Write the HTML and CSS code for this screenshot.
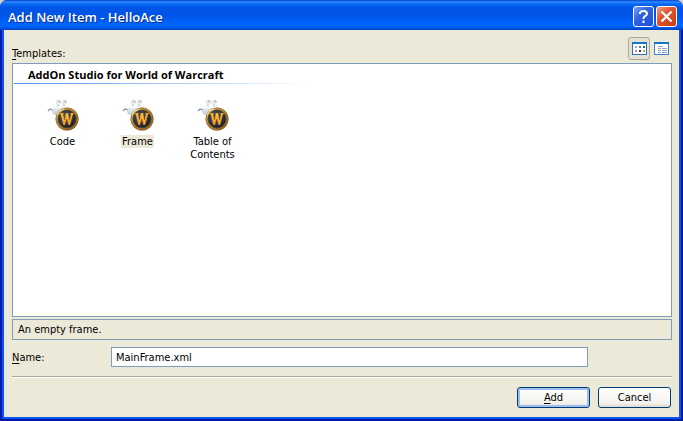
FILE: index.html
```html
<!DOCTYPE html>
<html lang="en">
<head>
<meta charset="utf-8">
<title>Add New Item - HelloAce</title>
<link rel="stylesheet" href="styles.css">
</head>
<body>
<svg class="defs" width="0" height="0" aria-hidden="true">
  <defs>
    <linearGradient id="gold" x1="0" y1="0" x2="1" y2="1">
      <stop offset="0" stop-color="#ecd48c"/>
      <stop offset=".45" stop-color="#b98a3a"/>
      <stop offset="1" stop-color="#80571c"/>
    </linearGradient>
    <radialGradient id="navy" cx=".4" cy=".35" r=".7">
      <stop offset="0" stop-color="#4a5c70"/>
      <stop offset="1" stop-color="#101c2c"/>
    </radialGradient>
    <linearGradient id="flame" x1="0" y1="0" x2="0" y2="1">
      <stop offset="0" stop-color="#ffc63c"/>
      <stop offset="1" stop-color="#f09a28"/>
    </linearGradient>
    <linearGradient id="robot" x1="0" y1="0" x2="0" y2="1">
      <stop offset="0" stop-color="#f4f6f8"/>
      <stop offset="1" stop-color="#c3ccd6"/>
    </linearGradient>
    <symbol id="addon" viewBox="0 0 32 32">
      <path d="M1 12l2-2 3 1" fill="none" stroke="#8c9bab" stroke-width="1.500"/>
      <path d="M11 4v4M17 4v4" stroke="#c8d0d8" stroke-width="2"/>
      <circle cx="11" cy="3" r="2.500" fill="#e6eaee"/>
      <circle cx="17" cy="3" r="2.500" fill="#e6eaee"/>
      <path d="M11 2h2v2M17 2h2v2" fill="none" stroke="#a9b2bb"/>
      <path d="M7 8q7-3 15 0l2 3v5H8q-3-1-3-4z" fill="url(#robot)"/>
      <path d="M8 9q6-2 13 0" fill="none" stroke="#fff"/>
      <circle cx="20" cy="20" r="11.500" fill="url(#gold)"/>
      <circle cx="20" cy="20" r="11" fill="none" stroke="#8a6530" stroke-width=".7"/>
      <circle cx="20" cy="20" r="9" fill="url(#navy)" stroke="#594018"/>
      <path d="M10 16q2-5 7-6" fill="none" stroke="#f8e8b0"/>
      <path d="M12.500 14H17l-.8 1.500L17.500 21l1.300-7h2.400l1.300 7 1.300-5.500L23 14h4l-1.200 2-2.600 10h-1.800L19.800 20 18 26h-1.800L13.800 16z" fill="url(#flame)" stroke="#8a4a10" stroke-width=".4"/>
    </symbol>
  </defs>
</svg>
<form class="window">
  <header class="titlebar">
    <h1 class="title">Add New Item - HelloAce</h1>
    <button class="caption help" type="button" aria-label="Help">
      <svg width="19" height="19" viewBox="0 0 19 19" aria-hidden="true"><path d="M6 7V5.500Q7 4 9.500 4 13 4 13 6.500 13 8 11 9.200 9.500 10 9.500 12M9.500 13.500v2.500" fill="none" stroke="#fff" stroke-width="2"/></svg>
    </button>
    <button class="caption close" type="button" aria-label="Close">
      <svg width="19" height="19" viewBox="0 0 19 19" aria-hidden="true"><path d="M4.500 4.500l10 10M14.500 4.500l-10 10" stroke="#fff" stroke-width="2.300"/></svg>
    </button>
  </header>
  <main class="content">
    <div class="toolbar">
      <h2 class="label" id="templates"><u>T</u>emplates:</h2>
      <button class="view pressed" type="button" aria-label="Large icons" aria-pressed="true">
        <svg width="15" height="13" viewBox="0 0 15 13" aria-hidden="true">
          <rect x=".5" y=".5" width="14" height="12" fill="#fff" stroke="#2476c5"/>
          <path d="M0 0h15v2H0z" fill="#1675cd"/>
          <path d="M3 4h2v2H3z" fill="#a8a8c0"/><path d="M7 4h2v2H7z" fill="#5878b0"/><path d="M11 4h2v2h-2z" fill="#118a24"/>
          <path d="M3 8h2v2H3z" fill="#e58068"/><path d="M7 8h2v2H7z" fill="#173c92"/><path d="M11 8h2v2h-2z" fill="#d2a017"/>
        </svg>
      </button>
      <button class="view" type="button" aria-label="Small icons" aria-pressed="false">
        <svg width="15" height="13" viewBox="0 0 15 13" aria-hidden="true">
          <rect x=".5" y=".5" width="14" height="12" fill="#fff" stroke="#3b85d0"/>
          <path d="M0 0h15v2H0z" fill="#1675cd"/>
          <path d="M4 4.500h5M4 6.500h3M4 8.500h3M4 10.500h3M8 6.500h5M8 8.500h5M8 10.500h5" stroke="#91a5bd"/>
        </svg>
      </button>
    </div>
    <section class="templates" aria-labelledby="templates">
      <h3 class="group">AddOn Studio for World of Warcraft</h3>
      <ul class="items">
        <li class="item"><svg class="icon" aria-hidden="true"><use href="#addon"/></svg><span class="name">Code</span></li>
        <li class="item selected"><svg class="icon" aria-hidden="true"><use href="#addon"/></svg><span class="name">Frame</span></li>
        <li class="item"><svg class="icon" aria-hidden="true"><use href="#addon"/></svg><span class="name">Table of Contents</span></li>
      </ul>
    </section>
    <p class="description">An empty frame.</p>
    <div class="field">
      <label for="name"><u>N</u>ame:</label>
      <input class="input" id="name" type="text" value="MainFrame.xml">
    </div>
    <footer class="actions">
      <button class="button default" type="submit"><span><u>A</u>dd</span></button>
      <button class="button" type="button">Cancel</button>
    </footer>
  </main>
</form>
</body>
</html>
```
FILE: styles.css
```css
* {
  box-sizing: border-box;
}

body {
  margin: 0;
  background: #d8d4c4;
  color: #000;
  font: 11px/13px "DejaVu Sans Condensed", "DejaVu Sans", sans-serif;
}

h1, h2, h3, p, ul {
  margin: 0;
  padding: 0;
  font-size: inherit;
  font-weight: normal;
}

button, input {
  font: inherit;
  color: inherit;
}

u {
  text-underline-offset: 2px;
}

.defs {
  position: absolute;
}

.window {
  display: flex;
  flex-direction: column;
  min-height: 100vh;
  border-radius: 7px 7px 0 0;
  overflow: hidden;
  background: #0846dc;
}

.titlebar {
  position: relative;
  z-index: 1;
  display: flex;
  align-items: center;
  gap: 2px;
  height: 30px;
  padding: 3px 6px 0 8px;
  background: linear-gradient(#0840c8 0, #2b8cff 2px, #0a68f4 4px, #0055e5 8px, #0055e8 16px, #0065ff 24px, #0060f8 27px, #0040c0 30px);
}

.title {
  flex: 1;
  color: #fff;
  font: 600 13px/18px "Open Sans", sans-serif;
  text-shadow: 1px 1px #0a2a8c;
}

.caption {
  display: grid;
  place-items: center;
  width: 21px;
  height: 21px;
  padding: 0;
  border: 1px solid #fff;
  border-radius: 3px;
}

.help {
  background: linear-gradient(135deg, #7ba2f4, #2f63e0 40%, #1c50d8);
}

.close {
  background: linear-gradient(135deg, #f0a088, #e0552c 40%, #c83c10);
}

.content {
  flex: 1;
  display: flex;
  flex-direction: column;
  margin: 0 4px 4px;
  padding: 7px 7px 9px 8px;
  background: #ece9d8;
  box-shadow: 0 0 0 2px #0a55ee, 0 0 0 4px #0019a8;
}

.toolbar {
  display: flex;
  align-items: flex-start;
  height: 26px;
}

.label {
  flex: 1;
  align-self: flex-end;
  padding-bottom: 3px;
}

.view {
  display: grid;
  place-items: center;
  width: 22px;
  height: 23px;
  padding: 0;
  border: 1px solid transparent;
  border-radius: 3px;
  background: none;
}

.pressed {
  border-color: #aaa89a;
  background: #e4e1d2;
}

.templates {
  flex: 1;
  border: 1px solid #7f9db9;
  background: #fff;
}

.group {
  height: 20px;
  padding: 4px 0 0 15px;
  background: linear-gradient(90deg, #4a90ee, #fff) 1px 100% / 296px 1px no-repeat;
  font-family: "Open Sans", sans-serif;
  font-weight: bold;
}

.items {
  display: flex;
  flex-wrap: wrap;
  padding: 15px 12px;
  list-style: none;
}

.item {
  display: flex;
  flex-direction: column;
  align-items: center;
  gap: 4px;
  width: 75px;
  text-align: center;
}

.icon {
  width: 32px;
  height: 32px;
}

.name {
  max-width: 60px;
  padding: 0 1px;
}

.selected .name {
  background: #ece9d8;
}

.description {
  margin: 2px 0 7px;
  padding: 3px 5px;
  border: 1px solid #7f9db9;
}

.field {
  display: grid;
  grid-template-columns: 99px 1fr 84px;
  align-items: center;
  padding-bottom: 9px;
}

.input {
  min-width: 0;
  height: 20px;
  padding: 0 4px;
  border: 1px solid #7f9db9;
  border-radius: 0;
  outline: none;
  background: #fff;
}

.actions {
  display: flex;
  justify-content: flex-end;
  gap: 8px;
  padding: 10px 1px 0 0;
  border-top: 1px solid #aca899;
  box-shadow: inset 0 1px #fff;
}

.button {
  width: 73px;
  height: 21px;
  padding: 0;
  border: 1px solid #003c74;
  border-radius: 3px;
  background: linear-gradient(#fff, #f3f2ec 80%, #dcd8cc);
}

.default {
  box-shadow: inset 0 0 0 2px #a0bdf2;
}
```
